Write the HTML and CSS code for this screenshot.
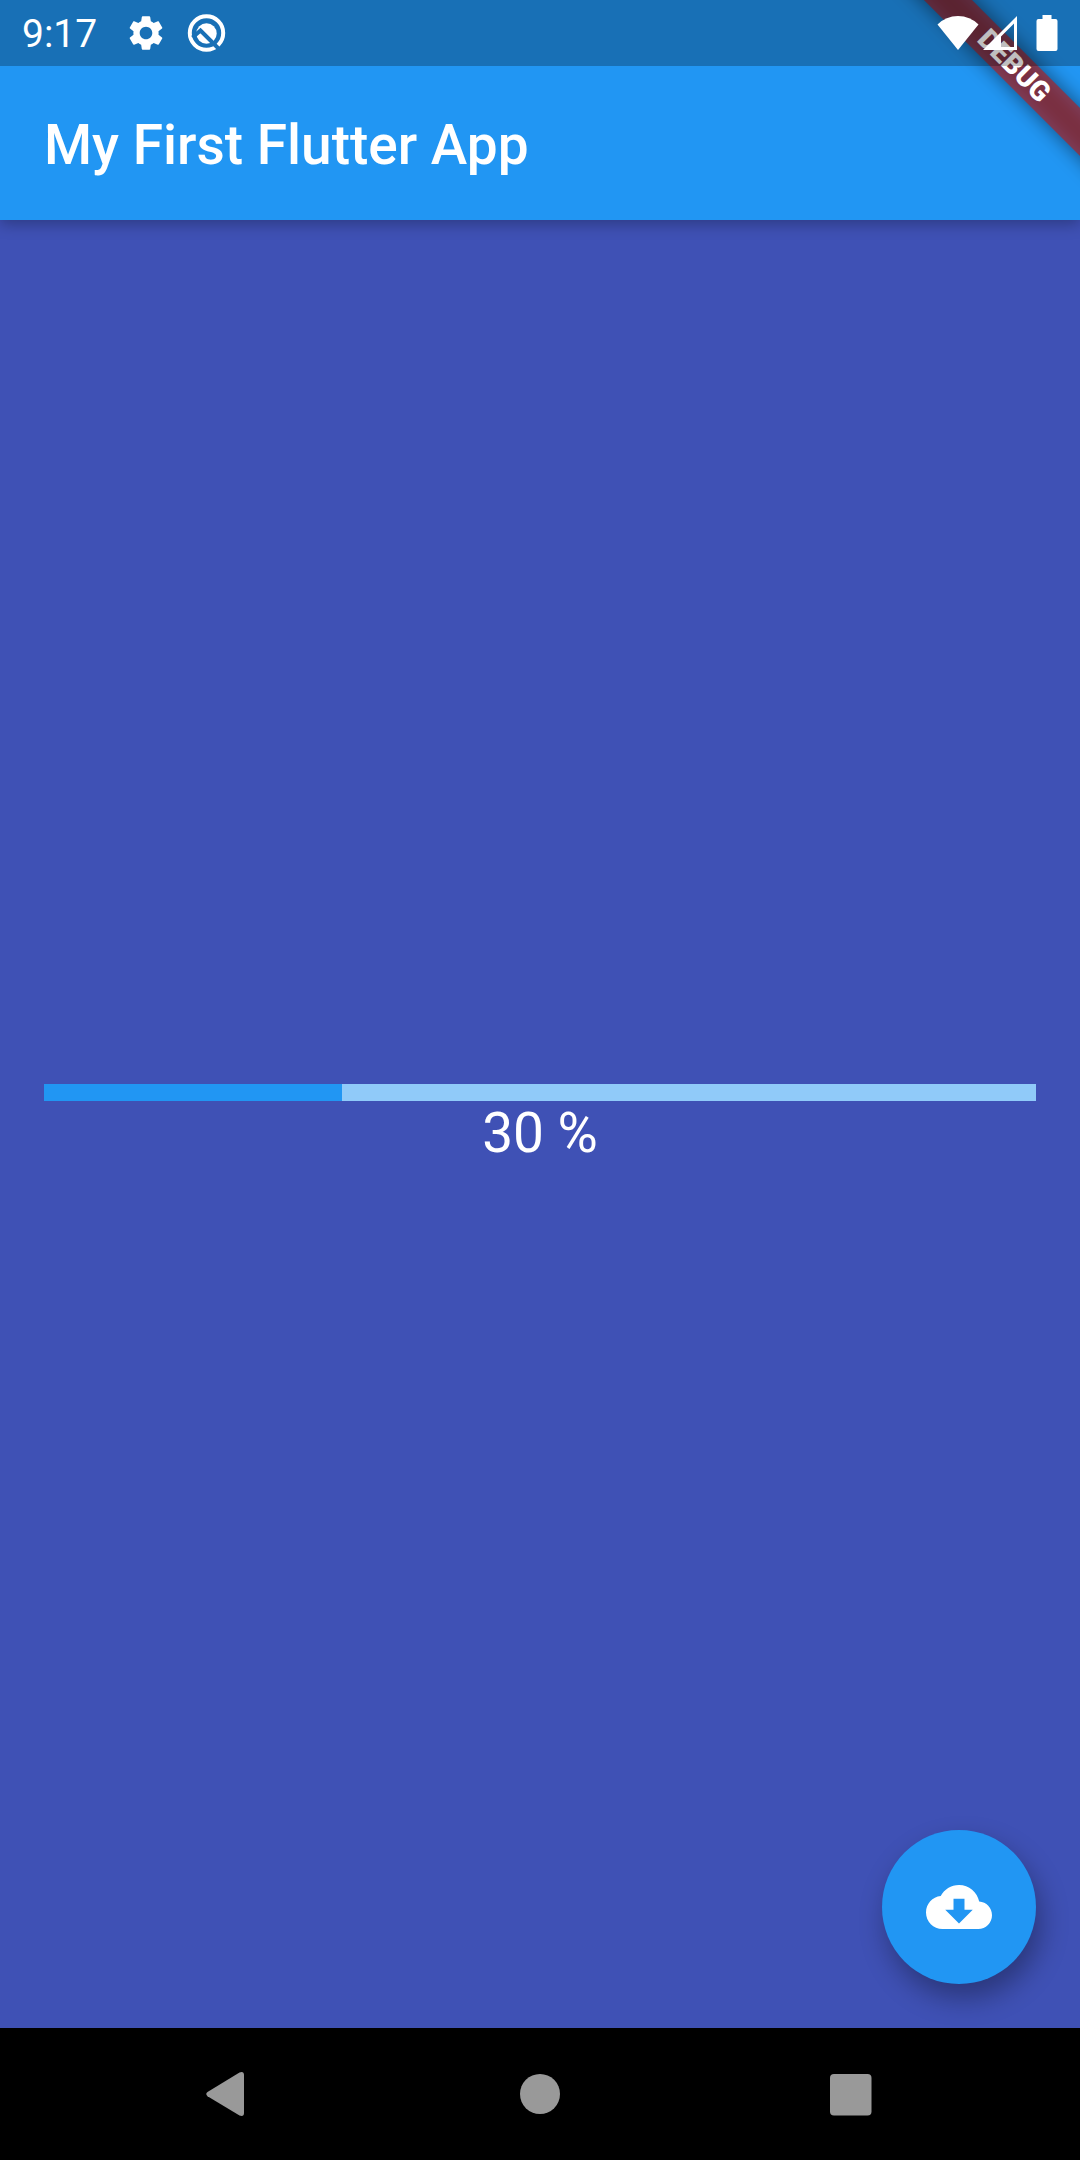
FILE: index.html
```html
<!DOCTYPE html>
<html lang="en">
<head>
<meta charset="utf-8">
<meta name="viewport" content="width=device-width, initial-scale=1">
<title>My First Flutter App</title>
<link rel="stylesheet" href="styles.css">
</head>
<body>
<div class="screen">
  <header class="top">
    <div class="status">
      <span class="clock">9:17</span>
      <svg class="status-icon gear" viewBox="0 0 24 24" aria-hidden="true"><path d="M19.14 12.94c.04-.3.06-.61.06-.94 0-.32-.02-.64-.07-.94l2.03-1.58c.18-.14.23-.41.12-.61l-1.92-3.32c-.12-.22-.37-.29-.59-.22l-2.39.96c-.5-.38-1.03-.7-1.62-.94L14.4 2.81c-.04-.24-.24-.41-.48-.41h-3.84c-.24 0-.43.17-.47.41L9.25 5.35c-.59.24-1.13.57-1.62.94l-2.39-.96c-.22-.08-.47 0-.59.22L2.74 8.87c-.12.21-.08.47.12.61l2.03 1.58c-.05.3-.09.63-.09.94s.02.64.07.94l-2.03 1.58c-.18.14-.23.41-.12.61l1.92 3.32c.12.22.37.29.59.22l2.39-.96c.5.38 1.03.7 1.62.94l.36 2.54c.05.24.24.41.48.41h3.84c.24 0 .44-.17.47-.41l.36-2.54c.59-.24 1.13-.56 1.62-.94l2.39.96c.22.08.47 0 .59-.22l1.92-3.32c.12-.22.07-.47-.12-.61l-2.01-1.58zM12 15.6c-1.98 0-3.6-1.62-3.6-3.6s1.62-3.6 3.6-3.6 3.6 1.62 3.6 3.6-1.62 3.6-3.6 3.6z"/></svg>
      <svg class="status-icon" viewBox="0 0 42 42" aria-hidden="true">
        <mask id="chevron">
          <rect width="42" height="42" fill="#fff"/>
          <path d="M6.500 25.500L14.500 18.500L34 38" fill="none" stroke="#000" stroke-width="4"/>
        </mask>
        <g mask="url(#chevron)">
          <circle class="ring" cx="20.500" cy="21" r="16.700"/>
          <circle cx="20.500" cy="21.500" r="10.200"/>
        </g>
      </svg>
      <span class="signals">
        <svg width="42" height="36" viewBox="0 0 42 36" aria-hidden="true"><path d="M0.5 9.5Q9 1 21 1T41.500 9.500L21 35z"/></svg>
        <svg width="34" height="36" viewBox="0 0 34 36" aria-hidden="true"><path fill-rule="evenodd" d="M34 1V35H0zM31 8.500L18 21.500V32H31z"/></svg>
        <svg class="battery" width="22" height="36" viewBox="0 0 22 36" aria-hidden="true"><path d="M6.500 0H15.500V4H19.500Q21.500 4 21.500 6V34Q21.500 36 19.500 36H2.500Q.5 36 .5 34V6Q.5 4 2.500 4H6.500z"/></svg>
      </span>
    </div>
    <h1 class="title">My First Flutter App</h1>
    <div class="banner"><span class="ribbon">DEBUG</span></div>
  </header>
  <main class="content">
    <progress class="bar" id="download" max="100" value="30"></progress>
    <label class="percent" for="download">30 %</label>
    <button class="fab" type="button" aria-label="Download">
      <svg width="66" height="66" viewBox="0 0 24 24" aria-hidden="true"><path d="M19.35 10.04C18.67 6.59 15.64 4 12 4 9.11 4 6.600 5.640 5.350 8.040 2.340 8.360 0 10.910 0 14c0 3.310 2.690 6 6 6h13c2.760 0 5-2.240 5-5 0-2.640-2.050-4.780-4.650-4.960zM17 13l-5 5-5-5h3V9h4v4h3z"/></svg>
    </button>
  </main>
  <nav class="nav">
    <button class="key" type="button" aria-label="Back"><svg width="46" height="46" viewBox="0 0 46 46" aria-hidden="true"><path d="M1.500 21Q-1 23 1.500 25.200L33.500 44.500Q38 46 38 42V4Q38 0 33.500 1.500z"/></svg></button>
    <button class="key" type="button" aria-label="Home"><svg width="46" height="46" viewBox="0 0 46 46" aria-hidden="true"><circle cx="23" cy="23" r="20"/></svg></button>
    <button class="key" type="button" aria-label="Overview"><svg width="46" height="46" viewBox="0 0 46 46" aria-hidden="true"><rect x="2" y="3" width="41.500" height="41.500" rx="4"/></svg></button>
  </nav>
</div>
</body>
</html>
```
FILE: styles.css
```css
* {
  box-sizing: border-box;
}

body {
  margin: 0;
  background: #000;
  color: #fff;
  font-family: Roboto, sans-serif;
}

svg {
  display: block;
  fill: currentColor;
}

button {
  padding: 0;
  border: 0;
  cursor: pointer;
}

.screen {
  display: flex;
  flex-direction: column;
  min-height: 100vh;
}

/* Status bar and app bar share one blue surface */
.top {
  position: relative;
  z-index: 1;
  background: #2196f3;
  box-shadow: 0 4px 14px rgba(0, 0, 0, 0.28);
}

.status {
  position: relative;
  z-index: 2;
  display: flex;
  align-items: center;
  height: 66px;
  padding: 0 22px;
  background: rgba(0, 0, 0, 0.25);
}

.clock {
  padding-top: 2px;
  font-size: 39px;
  line-height: 46px;
}

.status-icon {
  width: 42px;
  height: 42px;
  margin-left: 19px;
}

.gear {
  margin-left: 28px;
}

.ring {
  fill: none;
  stroke: currentColor;
  stroke-width: 4;
}

.signals {
  display: flex;
  gap: 4px;
  margin-left: auto;
}

.battery {
  margin-left: 15px;
}

.title {
  margin: 0;
  padding: 47px 44px 43px;
  font-size: 55px;
  font-weight: 500;
  line-height: 64px;
}

/* Corner ribbon, lying under the tinted status bar */
.banner {
  position: absolute;
  top: 0;
  right: 0;
  z-index: 1;
  width: 220px;
  height: 220px;
  overflow: hidden;
  pointer-events: none;
}

.ribbon {
  position: absolute;
  top: 49px;
  right: -94px;
  width: 320px;
  transform: rotate(45deg);
  font-size: 28px;
  font-weight: 900;
  line-height: 34px;
  text-align: center;
}

.ribbon::before,
.ribbon::after {
  content: "";
  position: absolute;
  inset: 0;
  z-index: -1;
}

.ribbon::before {
  background: rgba(0, 0, 0, 0.5);
  filter: blur(10px);
}

.ribbon::after {
  background: rgba(183, 28, 28, 0.63);
}

.content {
  position: relative;
  flex: 1;
  display: flex;
  flex-direction: column;
  align-items: center;
  justify-content: center;
  padding: 0 44px;
  background: #3f51b5;
}

.bar {
  appearance: none;
  display: block;
  width: 100%;
  height: 17px;
  border: 0;
  background: #90caf9;
}

.bar::-webkit-progress-bar {
  background: #90caf9;
}

.bar::-webkit-progress-value {
  background: #2196f3;
}

.bar::-moz-progress-bar {
  background: #2196f3;
}

.percent {
  font-size: 55px;
  line-height: 64px;
}

.fab {
  position: absolute;
  right: 44px;
  bottom: 44px;
  display: grid;
  place-items: center;
  width: 154px;
  height: 154px;
  border-radius: 50%;
  background: #2196f3;
  color: #fff;
  box-shadow: 5px 14px 28px rgba(0, 0, 0, 0.33);
}

.nav {
  display: grid;
  grid-template-columns: repeat(3, 1fr);
  height: 132px;
  padding: 0 73px;
  background: #000;
}

.key {
  display: grid;
  place-items: center;
  background: none;
  color: #999;
}
```
